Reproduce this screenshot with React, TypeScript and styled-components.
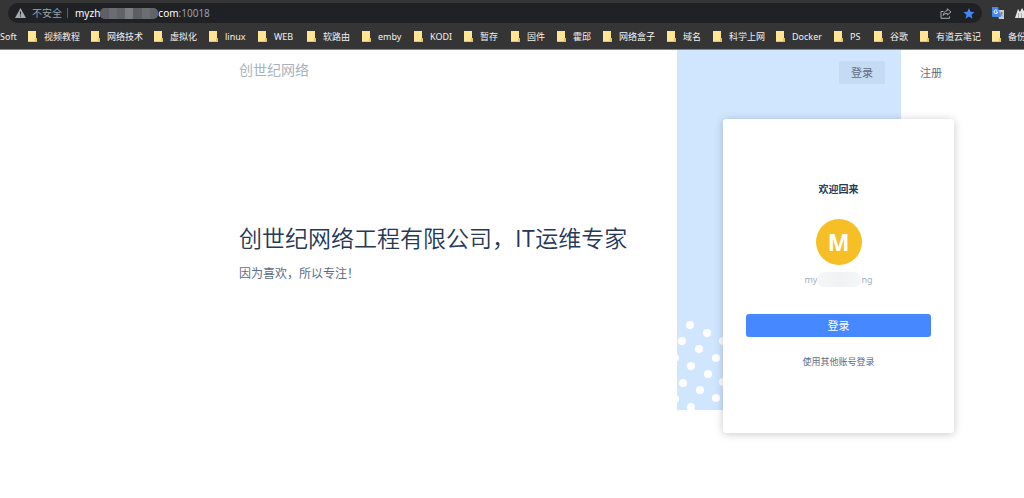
import React from "react";
import styled, { createGlobalStyle } from "styled-components";

const GlobalStyle = createGlobalStyle`
  * { box-sizing: border-box; }
  body {
    margin: 0;
    background: #fff;
    overflow-x: hidden;
    font-family: "Noto Sans", "Noto Sans CJK SC", sans-serif;
  }
  button { font-family: inherit; border: 0; cursor: pointer; }
`;

const Browser = styled.header`
  background: #353535;
  border-bottom: 1px solid #858585;
  overflow: hidden;
`;

const Toolbar = styled.div`
  display: flex;
  align-items: center;
  height: 26px;
  padding-left: 8px;
`;

const AddressBar = styled.div`
  display: flex;
  align-items: center;
  flex: 1;
  height: 20px;
  padding: 0 7px;
  border-radius: 10px;
  background: #202124;
  color: #9aa0a6;
  font-size: 10px;
  line-height: 20px;
`;

const Security = styled.span`
  margin-left: 6px;
  padding-right: 5px;
  line-height: 10px;
  border-right: 1px solid #5f6368;
`;

const Address = styled.span`
  display: flex;
  align-items: center;
  flex: 1;
  margin-left: 7px;
`;

const Host = styled.span`
  color: #fff;
`;

const HostMask = styled.span`
  display: flex;
  width: 58px;
  height: 11px;
  border-radius: 5px;
  overflow: hidden;
  background: #626367;
`;

const MaskBlock = styled.span<{ $tone: string }>`
  flex: 1;
  background: ${(p) => p.$tone};
`;

const IconButton = styled.button`
  display: flex;
  padding: 0;
  margin-left: 11px;
  background: none;
`;

const Extensions = styled.div`
  display: flex;
  gap: 10px;
  width: 42px;
  padding-left: 10px;
  flex: none;
  svg { flex: none; }
`;

const Bookmarks = styled.nav`
  display: flex;
  height: 23px;
  overflow: hidden;
`;

const Bookmark = styled.a<{ $width: number }>`
  display: flex;
  align-items: center;
  flex: none;
  gap: 7px;
  width: ${(p) => p.$width}px;
  height: 21px;
  color: #f1f1f1;
  font-size: 9px;
  text-decoration: none;
  white-space: nowrap;
`;

const Page = styled.main`
  display: grid;
  grid-template-columns: minmax(0, 1fr) 46px 178px 53px;
  grid-template-rows: 69px minmax(291px, auto) 23px;
  padding: 0 70px 64px 239px;
`;

const Backdrop = styled.div`
  grid-column: 2 / 4;
  grid-row: 1 / 3;
  display: flex;
  align-items: flex-end;
  background: #d0e6ff;
`;

const TopNav = styled.div`
  grid-column: 1 / 5;
  grid-row: 1;
  display: flex;
  align-items: flex-start;
  padding-top: 11px;
`;

const Logo = styled.a`
  flex: 1;
  color: #a9b1c1;
  font-size: 14px;
  font-weight: 400;
  line-height: 18px;
  text-decoration: none;
`;

const NavButton = styled.button<{ $active?: boolean }>`
  width: 46px;
  height: 23px;
  margin-left: 23px;
  padding: 0;
  border-radius: 2px;
  background: ${(p) => (p.$active ? "#c5daf3" : "transparent")};
  color: #5e6c84;
  font-size: 11px;
  line-height: 23px;
`;

const Intro = styled.section`
  grid-column: 1;
  grid-row: 2 / 4;
  padding-top: 101px;
`;

const Title = styled.h1`
  margin: 0;
  color: #253858;
  font-family: "Noto Sans CJK SC", sans-serif;
  font-size: 23px;
  font-weight: 350;
  line-height: 34px;
  white-space: nowrap;
`;

const Subtitle = styled.p`
  margin: 11px 0 0;
  color: #5e6c84;
  font-size: 12px;
  line-height: 18px;
`;

const Card = styled.section`
  grid-column: 3 / 5;
  grid-row: 2 / 4;
  display: flex;
  flex-direction: column;
  align-items: center;
  padding: 63px 23px 0;
  border-radius: 3px;
  background: #fff;
  box-shadow: 0 1px 8px rgba(0, 0, 0, 0.22);
  z-index: 1;
`;

const Welcome = styled.h2`
  margin: 0;
  color: #253858;
  font-size: 10px;
  font-weight: 700;
  line-height: 15px;
`;

const Avatar = styled.div`
  width: 46px;
  height: 46px;
  margin-top: 22px;
  border-radius: 50%;
  background: #f6bf26;
  color: #fff;
  font-size: 23px;
  font-weight: 700;
  line-height: 46px;
  text-align: center;
`;

const Account = styled.div`
  display: flex;
  align-items: center;
  height: 16px;
  margin-top: 6px;
  color: #a5adba;
  font-size: 9px;
`;

const AccountMask = styled.span`
  width: 44px;
  height: 15px;
  border-radius: 7px;
  background: linear-gradient(90deg, #f5f6f8, #f0f2f4 50%, #f5f6f8);
`;

const LoginButton = styled.button`
  align-self: stretch;
  height: 23px;
  margin-top: 27px;
  padding: 0;
  border-radius: 3px;
  background: #4688ff;
  color: #fff;
  font-size: 11px;
  line-height: 23px;
`;

const OtherAccount = styled.a`
  margin-top: 18px;
  color: #5e6c84;
  font-size: 9px;
  line-height: 14px;
  text-decoration: none;
`;

const bookmarks: [string, number][] = [
  ["视频教程", 63],
  ["网络技术", 63],
  ["虚拟化", 55],
  ["linux", 49],
  ["WEB", 49],
  ["软路由", 55],
  ["emby", 52],
  ["KODI", 50],
  ["暂存", 47],
  ["固件", 46],
  ["霍邱", 46],
  ["网络盒子", 64],
  ["域名", 46],
  ["科学上网", 63],
  ["Docker", 58],
  ["PS", 40],
  ["谷歌", 46],
  ["有道云笔记", 72],
  ["备份", 60],
];

const dots = [
  [13, 15], [30, 23], [5, 31], [22, 39], [39, 48], [46, 31], [-2, 48],
  [14, 56], [31, 64], [6, 73], [23, 80], [39, 88], [46, 72], [-2, 89], [14, 97],
];

const maskTones = ["#606064", "#6b6c70", "#626367", "#7b7d80", "#5d5e62", "#6c6d70", "#626367"];

const Folder = () => (
  <svg width="9" height="11" viewBox="0 0 9 11" aria-hidden="true">
    <path d="M0 0H8V7H9V11H0Z" fill="#ffe594" />
    <path d="M0 10H7V7H9V11H0Z" fill="#e6c45f" />
  </svg>
);

export default function App() {
  return (
    <>
      <GlobalStyle />
      <Browser>
        <Toolbar>
          <AddressBar>
            <svg width="11" height="10" viewBox="0 0 11 10" aria-hidden="true">
              <path d="M5.5 0L11 10H0Z" fill="#a5a8ac" />
              <path d="M5 3.5H6V6.5H5ZM5 7.5H6V8.5H5Z" fill="#202124" />
            </svg>
            <Security>不安全</Security>
            <Address>
              <Host>myzh</Host>
              <HostMask>
                {maskTones.map((tone, i) => (
                  <MaskBlock key={i} $tone={tone} />
                ))}
              </HostMask>
              <Host>com</Host>
              <span>:10018</span>
            </Address>
            <IconButton aria-label="分享">
              <svg width="12" height="11" viewBox="0 0 12 11" fill="none" stroke="#a5a8ac">
                <path d="M3.5 3.5H1V10.3H9.5V8.5" />
                <path d="M7.3 .8L11 4L7.3 7V5.3C5.4 5.3 4.2 6 3.2 7.5C3.6 4.8 4.8 3 7.3 2.6Z" strokeLinejoin="round" />
              </svg>
            </IconButton>
            <IconButton aria-label="收藏">
              <svg width="12" height="11" viewBox="0 0 12 11">
                <path d="M6 0L7.5 3.8L11.6 4.1L8.5 6.7L9.5 10.7L6 8.5L2.5 10.7L3.5 6.7L.4 4.1L4.5 3.8Z" fill="#4389f5" />
              </svg>
            </IconButton>
          </AddressBar>
          <Extensions>
            <svg width="12" height="12" viewBox="0 0 12 12" aria-hidden="true">
              <path d="M5 3H12V12H7Z" fill="#c8cbd0" />
              <path d="M8 6H11M9.5 5V6Q9.5 8 7.8 9M8.5 7L11 9.5" stroke="#697078" strokeWidth=".8" fill="none" />
              <path d="M0 0H6L9 10H1Q0 10 0 9Z" fill="#4688ed" />
              <path d="M5.2 3.5A1.8 1.8 0 1 0 5.7 5H4" stroke="#fff" fill="none" />
            </svg>
            <svg width="14" height="12" viewBox="0 0 14 12" aria-hidden="true">
              <path d="M1 11L4 2L6 5L8 1L14 11Z" fill="#e4e4e4" />
              <path d="M4.5 6V11M7.5 6V11" stroke="#a8a8a8" />
            </svg>
          </Extensions>
        </Toolbar>
        <Bookmarks>
          <Bookmark href="#" $width={28}>Soft</Bookmark>
          {bookmarks.map(([name, width]) => (
            <Bookmark key={name} href="#" $width={width}>
              <Folder />
              {name}
            </Bookmark>
          ))}
        </Bookmarks>
      </Browser>
      <Page>
        <Backdrop>
          <svg width="100%" height="100" aria-hidden="true">
            {dots.map(([x, y]) => (
              <circle key={`${x}-${y}`} cx={x} cy={y} r="4" fill="#fff" />
            ))}
          </svg>
        </Backdrop>
        <TopNav>
          <Logo href="#">创世纪网络</Logo>
          <NavButton $active>登录</NavButton>
          <NavButton>注册</NavButton>
        </TopNav>
        <Intro>
          <Title>创世纪网络工程有限公司，IT运维专家</Title>
          <Subtitle>因为喜欢，所以专注！</Subtitle>
        </Intro>
        <Card>
          <Welcome>欢迎回来</Welcome>
          <Avatar>M</Avatar>
          <Account>
            my
            <AccountMask />
            ng
          </Account>
          <LoginButton>登录</LoginButton>
          <OtherAccount href="#">使用其他账号登录</OtherAccount>
        </Card>
      </Page>
    </>
  );
}
